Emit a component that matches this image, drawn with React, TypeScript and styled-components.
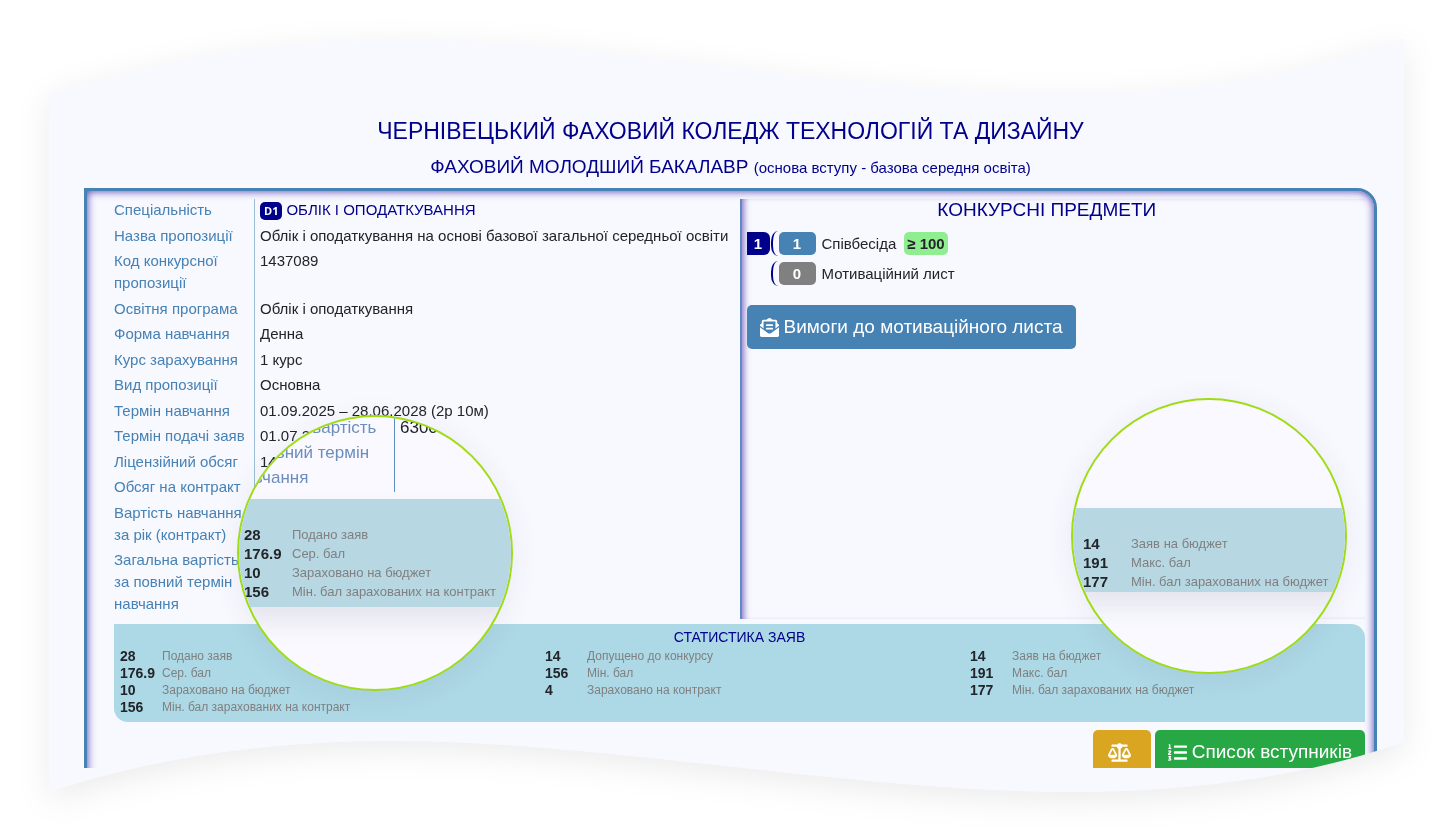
import React from "react";
import styled, { createGlobalStyle } from "styled-components";
import { FaBalanceScale, FaEnvelopeOpenText, FaListOl } from "react-icons/fa";

const GlobalStyle = createGlobalStyle`
  *, *::before, *::after { box-sizing: border-box; }
  body {
    margin: 0;
    background: #fff;
    color: #212529;
    font-family: "Liberation Sans", Arial, sans-serif;
    font-size: 15px;
    line-height: 22px;
  }
  h1, h2, h3, p, dl, dd, ul { margin: 0; padding: 0; font-weight: 400; }
  ul { list-style: none; }
`;

const Page = styled.main`
  padding: 38px 50px 34px 49px;
  filter: drop-shadow(0 8px 16px rgba(0, 0, 0, 0.08));
`;

const WaveDefs = styled.svg`
  position: absolute;
  width: 0;
  height: 0;
`;

const Sheet = styled.article`
  position: relative;
  padding: 78px 27px 24px 35px;
  background: #f8f8ff;
  clip-path: url(#wave);
`;

const Title = styled.h1`
  color: #00008b;
  font-size: 23px;
  line-height: 30px;
  text-align: center;
`;

const Subtitle = styled.h2`
  margin: 9px 0 8px;
  color: #00008b;
  font-size: 19px;
  line-height: 24px;
  text-align: center;

  small { font-size: 15px; }
`;

const PanelWindow = styled.div`
  overflow: hidden;
`;

const Panel = styled.section`
  margin-bottom: -32px;
  padding: 8px 9px 23px 27px;
  border: 3px solid #4682b4;
  border-radius: 0 20px 0 0;
  box-shadow: inset 0 0 8px rgba(50, 30, 160, 0.9);
`;

const Columns = styled.div`
  display: grid;
  grid-template-columns: 1fr 1fr;
  min-height: 420px;
`;

const Facts = styled.dl`
  display: grid;
  grid-template-columns: 140px 1fr;
`;

const FactName = styled.dt`
  padding: 0 8px 3px 0;
  color: #4682b4;
`;

const FactValue = styled.dd`
  padding: 0 0 3px 5px;
  border-left: 1px solid #9bbdd9;
`;

const Speciality = styled.span`
  color: #00008b;
`;

const Code = styled.span`
  display: inline-block;
  margin-right: 4px;
  padding: 0 4px;
  border-radius: 5px;
  background: #00008b;
  color: #fff;
  font: 700 11px/18px "Open Sans", "Liberation Sans", sans-serif;
`;

const Subjects = styled.section`
  padding: 0 18px 0 5px;
  border-left: 2px solid #6088c6;
  box-shadow: inset 6px 0 6px -4px rgba(60, 30, 160, 0.6);
`;

const SubjectsTitle = styled.h3`
  color: #00008b;
  font-size: 19px;
  line-height: 22px;
  text-align: center;
`;

const SubjectList = styled.ul`
  display: grid;
  gap: 7px;
  margin: 11px 0 20px;
`;

const Subject = styled.li`
  display: flex;
  align-items: center;
  height: 23px;
  line-height: 23px;
`;

const GroupNumber = styled.b<{ $empty?: boolean }>`
  width: 23px;
  height: 23px;
  border-radius: 0 6px 6px 0;
  background: ${(p) => (p.$empty ? "transparent" : "#00008b")};
  color: #fff;
  text-align: center;
`;

const Bracket = styled.i`
  width: 7px;
  height: 25px;
  margin: 0 1px;
  border-left: 2px solid #00008b;
  border-radius: 8px 0 0 8px / 12px 0 0 12px;
`;

const Weight = styled.b<{ $muted?: boolean }>`
  width: 37px;
  margin-right: 6px;
  border-radius: 5px;
  background: ${(p) => (p.$muted ? "#808080" : "#4682b4")};
  color: #fff;
  text-align: center;
`;

const Threshold = styled.b`
  margin-left: 8px;
  padding: 0 3px;
  border-radius: 5px;
  background: #90ee90;
`;

const Button = styled.button<{ $color: string }>`
  display: inline-flex;
  align-items: center;
  gap: 5px;
  height: 44px;
  padding: 0 13px;
  border: 0;
  border-radius: 5px;
  background: ${(p) => p.$color};
  color: #fff;
  font: 19px/22px "Liberation Sans", Arial, sans-serif;
  white-space: nowrap;
  cursor: pointer;
`;

const IconButton = styled(Button)`
  padding: 0 20px 0 15px;
`;

const Stats = styled.section`
  margin-top: 5px;
  padding: 2px 0 6px 6px;
  border-radius: 0 14px 0 14px;
  background: #add8e6;
`;

const StatsTitle = styled.h3`
  padding-right: 6px;
  color: #00008b;
  font-size: 14px;
  line-height: 22px;
  text-align: center;
`;

const StatsGrid = styled.div`
  display: grid;
  grid-template-columns: repeat(3, 1fr);
  column-gap: 30px;
`;

const StatList = styled.dl<{ $large?: boolean }>`
  display: grid;
  grid-template-columns: ${(p) => (p.$large ? "48px" : "42px")} 1fr;
  align-content: start;
  font-size: ${(p) => (p.$large ? 13 : 12)}px;
  line-height: ${(p) => (p.$large ? 19 : 17)}px;
  white-space: nowrap;

  dt {
    color: #212529;
    font-size: ${(p) => (p.$large ? 15 : 14)}px;
    font-weight: 700;
  }
  dd { color: #808080; }
`;

const Actions = styled.div`
  display: flex;
  justify-content: flex-end;
  gap: 4px;
  margin-top: 8px;
`;

const Lens = styled.aside<{ $side: "left" | "right" }>`
  position: absolute;
  ${(p) => (p.$side === "left" ? "left: 188px; top: 377px;" : "right: 57px; top: 360px;")}
  width: 276px;
  height: 276px;
  overflow: hidden;
  border: 2px solid #a0dc14;
  border-radius: 50%;
  background: #f9f9ff;
  box-shadow: 0 4px 30px rgba(60, 50, 90, 0.07);
`;

const LensFacts = styled.div`
  display: grid;
  grid-template-columns: 155px 1fr;
  margin: -2px 0 7px;
  color: #212529;
  font-size: 17px;
  line-height: 25px;
`;

const LensFactName = styled.p`
  margin-left: -4px;
  padding: 0 8px 2px 0;
  color: #6c8ebd;
`;

const LensFactValue = styled.p`
  padding-left: 5px;
  border-left: 1px solid #5f90bd;
`;

const LensBand = styled.div<{ $side: "left" | "right" }>`
  ${(p) => (p.$side === "left" ? "padding: 26px 0 6px 5px;" : "margin-top: 108px; padding: 26px 0 1px 10px;")}
  background: #b7d7e3;
  box-shadow: 0 14px 24px rgba(60, 50, 80, 0.1);
`;

type Stat = [string, string];

const statColumns: Stat[][] = [
  [["28", "Подано заяв"], ["176.9", "Сер. бал"], ["10", "Зараховано на бюджет"], ["156", "Мін. бал зарахованих на контракт"]],
  [["14", "Допущено до конкурсу"], ["156", "Мін. бал"], ["4", "Зараховано на контракт"]],
  [["14", "Заяв на бюджет"], ["191", "Макс. бал"], ["177", "Мін. бал зарахованих на бюджет"]],
];

const facts: [string, React.ReactNode][] = [
  ["Спеціальність", <Speciality><Code>D1</Code>ОБЛІК І ОПОДАТКУВАННЯ</Speciality>],
  ["Назва пропозиції", "Облік і оподаткування на основі базової загальної середньої освіти"],
  ["Код конкурсної пропозиції", "1437089"],
  ["Освітня програма", "Облік і оподаткування"],
  ["Форма навчання", "Денна"],
  ["Курс зарахування", "1 курс"],
  ["Вид пропозиції", "Основна"],
  ["Термін навчання", "01.09.2025 – 28.06.2028 (2р 10м)"],
  ["Термін подачі заяв", "01.07.2025"],
  ["Ліцензійний обсяг", "14"],
  ["Обсяг на контракт", ""],
  ["Вартість навчання за рік (контракт)", ""],
  ["Загальна вартість за повний термін навчання", ""],
];

function Statistics({ items, large }: { items: Stat[]; large?: boolean }) {
  return (
    <StatList $large={large}>
      {items.map(([value, name]) => (
        <React.Fragment key={name}>
          <dt>{value}</dt>
          <dd>{name}</dd>
        </React.Fragment>
      ))}
    </StatList>
  );
}

export default function App() {
  return (
    <>
      <GlobalStyle />
      <WaveDefs aria-hidden="true">
        <clipPath id="wave" clipPathUnits="objectBoundingBox">
          <path
            transform="scale(0.000738007 0.001328021)"
            d="M0 55C116 20 231 1.5 345 1.5C551 1.5 801 55.5 1016 55.5C1131 55.5 1241 39 1355 0V703C1251 740 1131 753 1021 753C806 753 551 702 341 702C226 702 111 717 0 753Z"
          />
        </clipPath>
      </WaveDefs>
      <Page>
        <Sheet>
          <Title>ЧЕРНІВЕЦЬКИЙ ФАХОВИЙ КОЛЕДЖ ТЕХНОЛОГІЙ ТА ДИЗАЙНУ</Title>
          <Subtitle>
            ФАХОВИЙ МОЛОДШИЙ БАКАЛАВР <small>(основа вступу - базова середня освіта)</small>
          </Subtitle>
          <PanelWindow>
            <Panel>
              <Columns>
                <Facts>
                  {facts.map(([name, value]) => (
                    <React.Fragment key={name}>
                      <FactName>{name}</FactName>
                      <FactValue>{value}</FactValue>
                    </React.Fragment>
                  ))}
                </Facts>
                <Subjects>
                  <SubjectsTitle>КОНКУРСНІ ПРЕДМЕТИ</SubjectsTitle>
                  <SubjectList>
                    <Subject>
                      <GroupNumber>1</GroupNumber>
                      <Bracket />
                      <Weight>1</Weight>
                      Співбесіда
                      <Threshold>≥ 100</Threshold>
                    </Subject>
                    <Subject>
                      <GroupNumber $empty />
                      <Bracket />
                      <Weight $muted>0</Weight>
                      Мотиваційний лист
                    </Subject>
                  </SubjectList>
                  <Button type="button" $color="#4682b4">
                    <FaEnvelopeOpenText size={19} />
                    Вимоги до мотиваційного листа
                  </Button>
                </Subjects>
              </Columns>
              <Stats>
                <StatsTitle>СТАТИСТИКА ЗАЯВ</StatsTitle>
                <StatsGrid>
                  {statColumns.map((items, i) => (
                    <Statistics key={i} items={items} />
                  ))}
                </StatsGrid>
              </Stats>
              <Actions>
                <IconButton type="button" $color="#daa520" aria-label="Порівняти">
                  <FaBalanceScale size={23} />
                </IconButton>
                <Button type="button" $color="#28a745">
                  <FaListOl size={19} />
                  Список вступників
                </Button>
              </Actions>
            </Panel>
          </PanelWindow>
          <Lens $side="left">
            <LensFacts>
              <LensFactName>Загальна вартість за повний термін навчання</LensFactName>
              <LensFactValue>6300</LensFactValue>
            </LensFacts>
            <LensBand $side="left">
              <Statistics items={statColumns[0]} large />
            </LensBand>
          </Lens>
          <Lens $side="right">
            <LensBand $side="right">
              <Statistics items={statColumns[2]} large />
            </LensBand>
          </Lens>
        </Sheet>
      </Page>
    </>
  );
}
